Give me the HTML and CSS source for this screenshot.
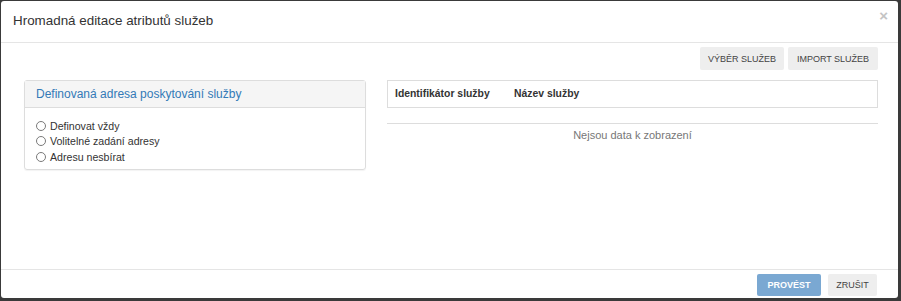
FILE: index.html
```html
<!DOCTYPE html>
<html lang="cs">
<head>
<meta charset="utf-8">
<title>Hromadná editace atributů služeb</title>
<link rel="stylesheet" href="styles.css">
</head>
<body>
<div class="modal">
  <div class="modal-header">
    <h4 class="modal-title">Hromadná editace atributů služeb</h4>
    <span class="close">×</span>
  </div>
  <div class="modal-body">
    <div class="toolbar">
      <button class="btn">VÝBĚR SLUŽEB</button>
      <button class="btn">IMPORT SLUŽEB</button>
    </div>
    <div class="content">
      <div class="panel">
        <div class="panel-heading">Definovaná adresa poskytování služby</div>
        <div class="panel-body">
          <label class="radio"><span class="circle"></span>Definovat vždy</label>
          <label class="radio"><span class="circle"></span>Volitelné zadání adresy</label>
          <label class="radio"><span class="circle"></span>Adresu nesbírat</label>
        </div>
      </div>
      <div class="grid">
        <div class="grid-head">
          <div class="col col-id">Identifikátor služby</div>
          <div class="col">Název služby</div>
        </div>
        <div class="grid-empty">Nejsou data k zobrazení</div>
      </div>
    </div>
  </div>
  <div class="modal-footer">
    <button class="btn btn-primary">PROVÉST</button>
    <button class="btn">ZRUŠIT</button>
  </div>
</div>
</body>
</html>
```
FILE: styles.css
```css
html, body {
  margin: 0;
  padding: 0;
  height: 100%;
}
body {
  background: #3a3a3a;
  font-family: "Liberation Sans", Arial, sans-serif;
  color: #333;
  overflow: hidden;
}
.modal {
  margin: 1px 0 0 1px;
  width: 897px;
  height: 297px;
  background: #fff;
  border-radius: 3px;
  display: flex;
  flex-direction: column;
  box-sizing: border-box;
}
.modal-header {
  height: 42px;
  box-sizing: border-box;
  border-bottom: 1px solid #e5e5e5;
  display: flex;
  align-items: center;
  justify-content: space-between;
  padding: 0 10px 2px 12px;
}
.modal-title {
  margin: 0;
  font-size: 13.4px;
  font-weight: normal;
  color: #333;
}
.close {
  font-size: 15px;
  color: #c4c4c4;
  font-weight: bold;
  line-height: 1;
  margin-top: -10px;
}
.modal-body {
  flex: 1;
  padding: 4px 20px 0 23px;
  display: flex;
  flex-direction: column;
}
.toolbar {
  display: flex;
  justify-content: flex-end;
  gap: 4px;
}
.btn {
  font-family: "Liberation Sans", Arial, sans-serif;
  font-size: 9px;
  color: #444;
  background: #eee;
  border: none;
  border-radius: 2px;
  height: 23px;
  padding: 0;
  margin: 0;
  white-space: nowrap;
}
.toolbar .btn:first-child { width: 84px; }
.toolbar .btn:last-child { width: 90px; }
.content {
  display: flex;
  gap: 21px;
  margin-top: 10px;
}
.panel {
  width: 342px;
  height: 90px;
  box-sizing: border-box;
  border: 1px solid #ddd;
  border-radius: 3px;
  box-shadow: 0 1px 1px rgba(0,0,0,0.05);
  display: flex;
  flex-direction: column;
}
.panel-heading {
  height: 27px;
  box-sizing: border-box;
  background: #f5f5f5;
  border-bottom: 1px solid #ddd;
  color: #337ab7;
  font-size: 12px;
  padding: 0 11px;
  display: flex;
  align-items: center;
}
.panel-body {
  padding: 10px 11px 0 11px;
  display: flex;
  flex-direction: column;
}
.radio {
  font-size: 10.6px;
  color: #333;
  height: 15.5px;
  display: flex;
  align-items: center;
}
.circle {
  width: 8px;
  height: 8px;
  border: 1px solid #7a7a7a;
  border-radius: 50%;
  margin-right: 4px;
  background: #fff;
}
.grid {
  flex: 1;
  display: flex;
  flex-direction: column;
}
.grid-head {
  height: 28px;
  box-sizing: border-box;
  border: 1px solid #ddd;
  display: flex;
  align-items: center;
  padding: 0 0 1px 7px;
  font-size: 10.4px;
  font-weight: bold;
  color: #333;
}
.col-id { width: 119px; }
.grid-empty {
  margin-top: 15px;
  border-top: 1px solid #ddd;
  text-align: center;
  font-size: 11px;
  color: #777;
  padding-top: 5px;
}
.modal-footer {
  height: 29px;
  box-sizing: border-box;
  border-top: 1px solid #e5e5e5;
  display: flex;
  justify-content: flex-end;
  gap: 7px;
  padding: 4px 21px 0 0;
}
.modal-footer .btn {
  height: 22px;
}
.btn-primary {
  background: #7aa8d2;
  color: #fff;
  font-weight: bold;
  width: 64px;
}
.modal-footer .btn:last-child { width: 49px; }
```
